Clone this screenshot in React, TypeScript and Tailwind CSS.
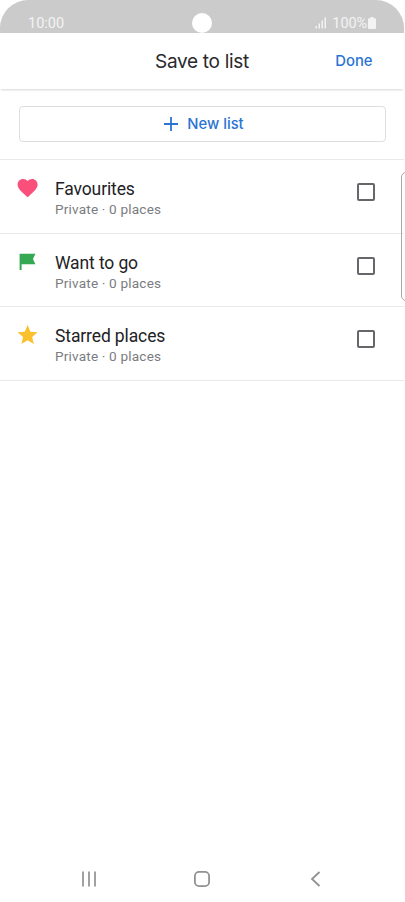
import { ReactNode, useState } from 'react';

interface SavedList {
    id: string;
    name: string;
    details: string;
    icon: ReactNode;
    rowClass: string;
}

const HeartIcon = () => (
    <svg className="h-6 w-6" viewBox="0.4 0 24 24" fill="#fb4f7b">
        <path d="M12 21.35l-1.45-1.32C5.4 15.36 2 12.28 2 8.5 2 5.42 4.42 3 7.5 3c1.74 0 3.41.81 4.5 2.09C13.09 3.81 14.76 3 16.5 3 19.58 3 22 5.42 22 8.5c0 3.78-3.4 6.86-8.55 11.54L12 21.35z" />
    </svg>
);

const FlagIcon = () => (
    <svg className="h-6 w-6" viewBox="0.4 0 24 24" fill="#34a853">
        <path d="M4 3.7h15.8l-2.4 5.3 2.4 5.2H6V20H4z" />
    </svg>
);

const StarIcon = () => (
    <svg className="h-6 w-6" viewBox="0.4 0 24 24" fill="#fbc02d">
        <path d="M12 17.27L18.18 21l-1.64-7.03L22 9.24l-7.19-.61L12 2 9.19 8.63 2 9.24l5.46 4.73L5.82 21z" />
    </svg>
);

const lists: SavedList[] = [
    { id: 'favourites', name: 'Favourites', details: 'Private · 0 places', icon: <HeartIcon />, rowClass: 'h-[74px]' },
    { id: 'want-to-go', name: 'Want to go', details: 'Private · 0 places', icon: <FlagIcon />, rowClass: 'h-[73.4px]' },
    { id: 'starred', name: 'Starred places', details: 'Private · 0 places', icon: <StarIcon />, rowClass: 'h-[73.6px]' },
];

const StatusBar = () => (
    <div className="relative flex h-[33px] w-[404px] justify-between rounded-t-[28px] bg-[#cbcbcb] pl-7 pr-[27px] pt-[14px] text-[14.5px] leading-[20px] text-[#f3f3f3]">
        <span>10:00</span>
        <div className="absolute left-[192px] top-[13px] h-5 w-5 rounded-full bg-white" />
        <div className="flex">
            <svg className="mr-[5px] mt-[3px] h-3 w-[12px]" viewBox="0 0 12 12" fill="currentColor">
                <rect x="0.5" y="9" width="1.5" height="2.5" />
                <rect x="3.5" y="6.5" width="1.5" height="5" />
                <rect x="6.5" y="3.5" width="1.5" height="8" />
                <rect x="9.5" y="0.5" width="1.5" height="11" />
            </svg>
            <span className="tracking-[-0.1px]">100%</span>
            <svg className="ml-px mr-px mt-[3px] h-3 w-2" viewBox="0 0 8 12" fill="currentColor">
                <path d="M2.5 0h3v1.2H7a1 1 0 0 1 1 1V11a1 1 0 0 1-1 1H1a1 1 0 0 1-1-1V2.2a1 1 0 0 1 1-1h1.5z" />
            </svg>
        </div>
    </div>
);

const NavigationBar = () => (
    <div className="flex h-[46px] w-[404px] items-center justify-between px-[81px] text-[#919191]">
        <svg className="h-4 w-4" viewBox="0 0 16 16" stroke="currentColor" strokeWidth="1.7">
            <path d="M2 .5v15M8 .5v15M14 .5v15" />
        </svg>
        <svg className="h-4 w-4" viewBox="0 0 16 16" fill="none" stroke="currentColor" strokeWidth="1.8">
            <rect x="0.9" y="0.9" width="14.2" height="14.2" rx="4.2" />
        </svg>
        <svg className="h-4 w-4" viewBox="0 0 16 16" fill="none" stroke="currentColor" strokeWidth="1.8">
            <path d="M12.5 1L5 8l7.5 7" />
        </svg>
    </div>
);

export default function App() {
    const [selected, setSelected] = useState<string[]>([]);

    const toggleList = (id: string) => {
        setSelected(selected.includes(id) ? selected.filter((s) => s !== id) : [...selected, id]);
    };

    return (
        <div className="relative flex h-[902px] w-[405px] flex-col overflow-hidden bg-white font-['Roboto',sans-serif]">
            <StatusBar />

            <header className="grid h-[56px] w-[404px] grid-cols-[1fr_auto_1fr] items-center shadow-[0_2px_2px_-1px_rgba(0,0,0,0.16)]">
                <h1 className="col-start-2 pt-[2px] font-['Inter',sans-serif] text-[19px] tracking-[-0.3px] text-[#29292c]">Save to list</h1>
                <button className="mr-[31.5px] justify-self-end font-['Inter',sans-serif] text-[14.8px] font-medium text-[#2a74d3]">
                    Done
                </button>
            </header>

            <div className="h-[71px] w-[404px] border-b border-[#e9e9e9] pl-[19px] pr-[18px] pt-[17px]">
                <button className="flex h-9 w-full items-center justify-center rounded-[4px] border border-[#dcdee1] pl-[3px] font-['Inter',sans-serif] text-[14.8px] font-medium text-[#2a74d3]">
                    <svg className="mr-[9px] h-[14px] w-[14px]" viewBox="0 0 14 14" stroke="currentColor" strokeWidth="1.8">
                        <path d="M7 0v14M0 7h14" />
                    </svg>
                    <span className="pt-px">New list</span>
                </button>
            </div>

            <ul className="w-[404px]">
                {lists.map((list) => (
                    <li key={list.id} className={`flex border-b border-[#e9e9e9] ${list.rowClass}`}>
                        <div className="ml-[15.5px] mt-4">{list.icon}</div>
                        <div className="ml-[15.5px] mt-[17px] flex-1">
                            <p className="text-[17.5px] leading-[24px] tracking-[-0.12px] text-[#222225]">{list.name}</p>
                            <p className="text-[13.6px] leading-4 tracking-[0.18px] text-[#7b7c80]">{list.details}</p>
                        </div>
                        <button
                            role="checkbox"
                            aria-checked={selected.includes(list.id)}
                            aria-label={list.name}
                            onClick={() => toggleList(list.id)}
                            className={`mr-[29.5px] mt-[23px] h-[18px] w-[18px] rounded-[2px] border-2 border-[#66676b] ${selected.includes(list.id) ? 'bg-[#2a74d3]' : ''}`}
                        />
                    </li>
                ))}
            </ul>

            <div className="flex-1" />
            <NavigationBar />

            {/* Edge panel handle */}
            <div className="absolute -right-[5px] top-[172px] h-[129px] w-[9px] rounded-l-[5px] border border-[#a8a8a8]" />
        </div>
    );
}
